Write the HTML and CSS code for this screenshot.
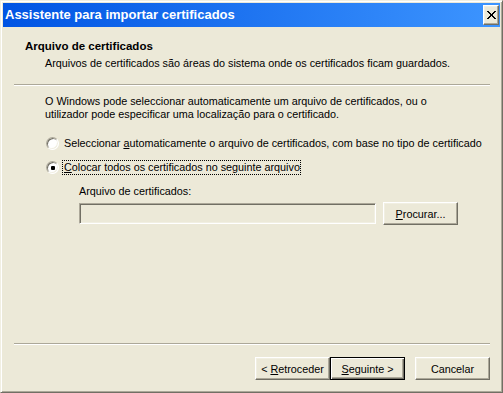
FILE: index.html
```html
<!DOCTYPE html>
<html lang="pt">
<head>
  <meta charset="UTF-8" />
  <title>Assistente para importar certificados</title>
  <link rel="stylesheet" href="styles.css">
</head>
<body>
  <div class="window">
    <div class="titlebar">
      <span class="title">Assistente para importar certificados</span>
      <span class="close">
        <svg width="9" height="8" viewBox="0 0 9 8" shape-rendering="crispEdges">
          <path d="M0 0h2v1H0zM7 0h2v1H7zM1 1h2v1H1zM6 1h2v1H6zM2 2h2v1H2zM5 2h2v1H5zM3 3h3v2H3zM2 5h2v1H2zM5 5h2v1H5zM1 6h2v1H1zM6 6h2v1H6zM0 7h2v1H0zM7 7h2v1H7z" fill="#000"/>
        </svg>
      </span>
    </div>

    <div class="header">
      <div class="h-title">Arquivo de certificados</div>
      <div class="h-sub">Arquivos de certificados são áreas do sistema onde os certificados ficam guardados.</div>
    </div>
    <div class="sep"></div>

    <div class="content">
      <p class="intro">O Windows pode seleccionar automaticamente um arquivo de certificados, ou o<br>utilizador pode especificar uma localização para o certificado.</p>
      <div class="radio">
        <span class="circle"></span>
        <span class="label">Seleccionar <u>a</u>utomaticamente o arquivo de certificados, com base no tipo de certificado</span>
      </div>
      <div class="radio second">
        <span class="circle checked"><span class="dot"></span></span>
        <span class="label focus"><u>C</u>olocar todos os certificados no seguinte arquivo</span>
      </div>
      <div class="store">
        <div class="store-label">Arquivo de certificados:</div>
        <div class="store-row">
          <div class="field"></div>
          <button class="btn"><u>P</u>rocurar...</button>
        </div>
      </div>
    </div>

    <div class="footer">
      <div class="sep"></div>
      <div class="buttons">
        <button class="btn">&lt; <u>R</u>etroceder</button>
        <button class="btn default"><u>S</u>eguinte &gt;</button>
        <button class="btn cancel">Cancelar</button>
      </div>
    </div>
  </div>
</body>
</html>
```

FILE: styles.css
```css
html, body {
  margin: 0; padding: 0; background: #ECE9D8;
  font-family: 'Liberation Sans', Arial, sans-serif; font-size: 10.8px; color: #000;
}
.window {
  width: 503px; height: 393px; box-sizing: border-box;
  display: flex; flex-direction: column;
  background: #ECE9D8; padding: 2px;
  border: 1px solid; border-color: #F1EFE2 #716F64 #716F64 #F1EFE2;
  box-shadow: inset 1px 1px #fff, inset -1px -1px #ACA899;
}
.titlebar {
  height: 24px; flex: none; display: flex; align-items: center;
  justify-content: space-between; padding: 0 1px 0 2px;
  background: linear-gradient(90deg, #0054E3, #3D95FF);
}
.title {
  color: #fff; font-weight: bold; font-size: 13px; line-height: 16px;
}
.close {
  width: 16px; height: 20px; box-sizing: border-box;
  display: flex; align-items: center; justify-content: center;
  background: #ECE9D8;
  border: 1px solid; border-color: #fff #716F64 #716F64 #fff;
  box-shadow: inset -1px -1px #ACA899, inset 1px 1px #F1EFE2;
}

.header { padding: 13px 0 0 22px; line-height: 13px; }
.h-title { font-weight: bold; font-size: 11.5px; }
.h-sub { margin: 4px 0 0 20px; }

.sep {
  height: 1px; border-top: 1px solid #ACA899; background: #fff;
  margin: 14px 10px 0 11px;
}

.content { padding-left: 42px; line-height: 13px; }
.intro { margin: 9px 0 0 0; }

.radio { display: flex; align-items: center; margin-top: 15px; height: 15px; }
.radio.second { margin-top: 9px; }
.circle {
  width: 13px; height: 13px; box-sizing: border-box; border-radius: 50%;
  background: #fff; flex: none; display: flex; align-items: center; justify-content: center;
  border: 1px solid; border-color: #ACA899 #fff #fff #ACA899;
  box-shadow: inset 1px 1px #716F64, inset -1px -1px #F1EFE2;
  margin: 0 3px 0 1px;
}
.dot { width: 4px; height: 4px; border-radius: 1px; background: #000; }
.label { border: 1px dotted transparent; padding: 0 0 0 1px; line-height: 13px; }
.label.focus { border-color: #000; }

.store { padding-left: 34px; margin-top: 10px; }
.store-row { display: flex; align-items: center; margin-top: 4px; }
.field {
  width: 297px; height: 21px; box-sizing: border-box; background: #ECE9D8;
  border: 1px solid; border-color: #ACA899 #fff #fff #ACA899;
  box-shadow: inset 1px 1px #716F64, inset -1px -1px #F1EFE2;
}

.btn {
  width: 75px; height: 23px; box-sizing: border-box; padding: 0;
  font-family: inherit; font-size: 10.8px; color: #000;
  background: #ECE9D8;
  border: 1px solid; border-color: #fff #716F64 #716F64 #fff;
  box-shadow: inset -1px -1px #ACA899, inset 1px 1px #F1EFE2;
}
.store-row .btn { margin-left: 7px; }
.btn.default {
  border-color: #000;
  box-shadow: inset 1px 1px #fff, inset -1px -1px #716F64, inset -2px -2px #ACA899;
}

.footer { margin-top: auto; padding-bottom: 10px; }
.footer .sep { margin-top: 0; }
.buttons { display: flex; justify-content: flex-end; margin: 12px 10px 0 0; }
.btn.cancel { margin-left: 10px; }
```
